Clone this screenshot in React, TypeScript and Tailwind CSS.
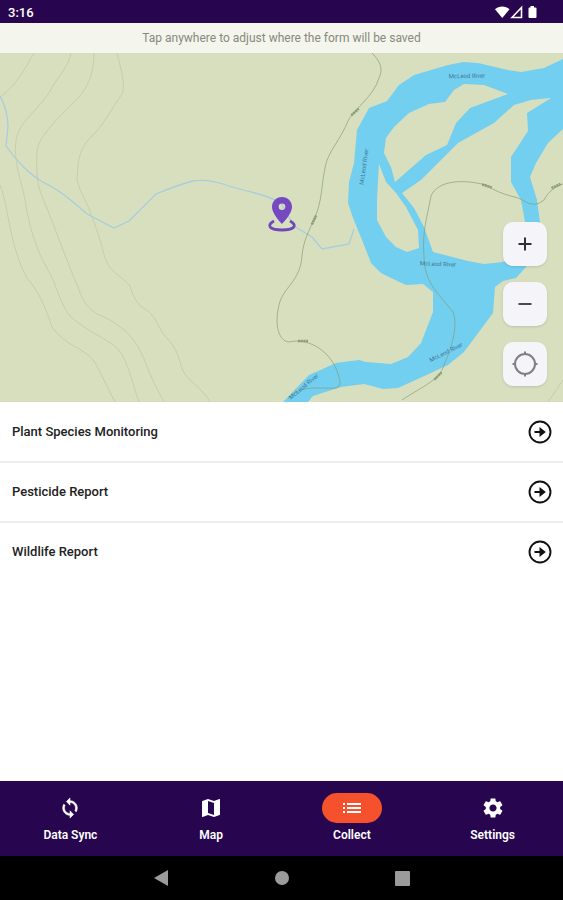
import { MdList, MdMap, MdSettings } from "react-icons/md";

const forms = ["Plant Species Monitoring", "Pesticide Report", "Wildlife Report"];

function SyncIcon({ className }: { className?: string }) {
  return (
    <svg className={className} viewBox="0 0 24 24" fill="currentColor" stroke="currentColor" strokeWidth="0.6" aria-hidden="true">
      <path d="M12 4V1L8 5l4 4V6c3.310 0 6 2.690 6 6 0 1.010-.25 1.970-.7 2.800l1.460 1.460C19.540 15.030 20 13.570 20 12c0-4.420-3.580-8-8-8zm0 14c-3.310 0-6-2.690-6-6 0-1.010.25-1.970.7-2.800L5.240 7.740C4.460 8.970 4 10.430 4 12c0 4.420 3.580 8 8 8v3l4-4-4-4v3z" />
    </svg>
  );
}

const tabs = [
  { label: "Data Sync", Icon: SyncIcon, active: false },
  { label: "Map", Icon: MdMap, active: false },
  { label: "Collect", Icon: MdList, active: true },
  { label: "Settings", Icon: MdSettings, active: false },
];

const riverNames = [
  { x: 467, y: 78, angle: -1 },
  { x: 366, y: 167, angle: -82 },
  { x: 438, y: 266, angle: 2 },
  { x: 447, y: 354, angle: -27 },
  { x: 305, y: 388, angle: -40 },
];

const elevations = [
  { x: 355, y: 112, angle: -42 },
  { x: 314, y: 220, angle: -65 },
  { x: 487, y: 186, angle: 18 },
  { x: 556, y: 186, angle: -25 },
  { x: 303, y: 341, angle: 0 },
  { x: 438, y: 376, angle: -45 },
];

function StatusBar() {
  return (
    <header className="flex h-[23px] items-center justify-between bg-[#27064f] pr-[26px] pl-2 text-white">
      <span className="pt-0.5 text-[13px] leading-4 font-medium">3:16</span>
      <svg className="h-4 w-[42px]" viewBox="0 0 42 16" aria-hidden="true">
        <path d="M0 5.200C4 1.500 10.500 1.500 14.500 5.200L7.250 14Z" fill="#fff" />
        <path d="M17 13.500 26.500 3.500V13.500Z" fill="none" stroke="#fff" strokeWidth="1.600" />
        <path d="M34 3.500H35.500V2H39V3.500H40.500Q41.500 3.500 41.500 4.500V13Q41.500 14 40.500 14H34.500Q33.500 14 33.500 13V4.500Z" fill="#fff" />
      </svg>
    </header>
  );
}

function Terrain() {
  return (
    <svg
      className="absolute inset-0 h-full w-full"
      viewBox="0 53 563 349"
      preserveAspectRatio="xMidYMid slice"
      role="img"
      aria-label="McLeod River"
    >
      <rect x="0" y="53" width="563" height="349" fill="#d8dfbf" />
      <g fill="none" stroke="#c5cfab" strokeWidth="1">
        <path d="M34 53C24 70 16 86 0 97" />
        <path d="M71 53C68 68 58 76 50 91C39 110 19 121 16 140C13 163 22 182 25 200C29 225 35 248 48 270C56 283 60 304 70 316C90 334 104 336 119 350C128 362 132 382 139 402" />
        <path d="M94 53C94 70 90 85 78 98C61 115 38 137 37 151C36 174 37 186 44 201C54 225 65 257 78 287C84 305 91 312 102 316C123 326 135 337 144 359C151 378 158 391 164 402" />
        <path d="M117 53C121 69 126 86 122 94C110 111 103 126 92 136C80 148 78 157 77 180C81 195 88 204 90 212C97 229 102 246 105 258C110 273 122 276 130 286C133 295 136 305 147 310C158 319 159 332 169 340C183 357 178 369 189 379C199 388 206 394 210 402" />
        <path d="M0 185C9 207 9 245 27 278C41 294 46 310 52 327C65 346 83 347 94 361C102 375 108 389 115 402" />
        <path d="M563 380 548 402" />
      </g>
      <path
        fill="none"
        stroke="#a9cddc"
        strokeWidth="1.300"
        d="M0 96C5 104 8 117 8 126L6 146C17 162 31 175 41 181C55 188 65 195 72 201L87 214L114 228L129 221L156 194C168 189 181 184 193 181C207 179 218 182 229 186C251 193 263 193 281 203L294 226L312 237L322 249L349 244L354 229"
      />
      <path
        fill="#73cff0"
        fillRule="evenodd"
        d="M563 59 544 68 521 72 508 70 478 63 463 62 448 65 414 75 399 85 387 101 369 108 357 130 354 163 349 182 348 203 353 218 364 245 371 263 381 273 391 278 406 285 423 284 433 292 433 312 421 343 408 357 391 364 366 362 359 360 336 363 309 375 283 402 308 402 313 396 341 387 364 384 383 389 398 388 431 373 448 365 464 352 493 313 495 287 503 281 516 278 526 267 536 250 540 222 537 200 530 177 536 163 548 143 563 129ZM551 98 527 113 528 131 511 157 511 182 521 200 525 222 525 255 503 262 484 264 468 261 433 252 424 227 414 208 402 193 421 180 458 143 494 123 514 105 531 100ZM508 94 484 85 464 84 454 90 445 102 429 104 409 113 394 127 386 138 384 153 391 167 395 182 426 155 447 145 456 123 470 108ZM379 164 377 200 377 220 386 237 396 247 407 252 419 248 418 230 406 207 396 193 386 182Z"
      />
      <g fill="none" stroke="#7f9b70" strokeOpacity=".65" strokeWidth="1">
        <path d="M372 53C379 60 384 68 379 78C374 96 354 109 348 121C341 139 327 153 325 168C322 182 322 196 318 209C313 225 304 236 302 255C301 281 283 287 279 305C274 326 279 341 289 342C310 337 332 353 338 374Q343 387 336 388C316 389 301 384 288 399" />
        <path d="M402 400C423 386 440 380 444 365C453 345 458 324 453 312C441 296 424 284 424 256C422 231 427 218 431 196C438 180 463 179 486 185C504 197 518 196 524 201Q535 208 544 200C549 190 556 187 563 184" />
      </g>
      <g fill="#3f7895" fontFamily="Roboto, sans-serif" fontSize="6" textAnchor="middle">
        {riverNames.map((name) => (
          <text key={name.x} x={name.x} y={name.y} transform={`rotate(${name.angle} ${name.x} ${name.y})`}>
            McLeod River
          </text>
        ))}
      </g>
      <g fill="none" stroke="#7f9472" strokeWidth="2.500" strokeDasharray="2.200 .5" strokeOpacity=".85">
        {elevations.map((mark) => (
          <path key={mark.x} d={`M${mark.x - 5} ${mark.y}h10`} transform={`rotate(${mark.angle} ${mark.x} ${mark.y})`} />
        ))}
      </g>
      <path d="M274 221C265 226 271 230 282 230C293 230 299 226 290 221" fill="none" stroke="#7048b8" strokeWidth="2.800" />
      <path
        d="M282 197C276 197 272 201.500 272 207C272 214 282 224 282 224S292 214 292 207C292 201.500 288 197 282 197ZM282 203.500A3.300 3.300 0 1 1 282 210.100A3.300 3.300 0 0 1 282 203.500Z"
        fill="#7549c0"
        fillRule="evenodd"
      />
    </svg>
  );
}

const controls = [
  {
    label: "Zoom in",
    art: <path d="M14 7.500V20.500M7.500 14H20.500" stroke="#303034" strokeWidth="2" />,
  },
  {
    label: "Zoom out",
    art: <path d="M7.500 14H20.500" stroke="#4a4a4e" strokeWidth="2" />,
  },
  {
    label: "My location",
    art: (
      <g stroke="#808084" strokeWidth="2">
        <circle cx="14" cy="14" r="10" />
        <path d="M14 1.500V4M14 24V26.500M1.500 14H4M24 14H26.500" />
      </g>
    ),
  },
];

export default function App() {
  return (
    <div className="flex min-h-screen flex-col bg-white font-[Roboto,sans-serif] text-[#222]">
      <StatusBar />
      <main className="flex flex-1 flex-col">
        <p className="bg-[#f4f5ec] py-[7px] text-center text-[12px] leading-4 text-[#88887f]">
          Tap anywhere to adjust where the form will be saved
        </p>
        <section className="relative flex min-h-[349px] items-end justify-end overflow-hidden bg-[#d8dfbf]">
          <Terrain />
          <div className="relative flex flex-col gap-4 pr-4 pb-4">
            {controls.map((control) => (
              <button
                key={control.label}
                type="button"
                aria-label={control.label}
                className="flex size-11 items-center justify-center rounded-[10px] bg-[#f5f4f8] shadow-sm"
              >
                <svg className="size-7" viewBox="0 0 28 28" fill="none" aria-hidden="true">
                  {control.art}
                </svg>
              </button>
            ))}
          </div>
        </section>
        <ul className="divide-y-2 divide-[#eeeeee] pt-px">
          {forms.map((form) => (
            <li key={form}>
              <button type="button" className="flex h-[58px] w-full items-center justify-between pr-[11px] pl-3 text-left">
                <span className="text-[13px] leading-4 font-medium">{form}</span>
                <svg className="size-6" viewBox="0 0 24 24" fill="none" aria-hidden="true">
                  <circle cx="12" cy="12" r="10.500" stroke="#111" strokeWidth="1.900" />
                  <path d="M6.500 10.900H11.500V7L17.800 12 11.500 17V13.100H6.500Z" fill="#111" />
                </svg>
              </button>
            </li>
          ))}
        </ul>
      </main>
      <nav className="grid h-[75px] grid-cols-4 bg-[#27064f] text-white">
        {tabs.map(({ label, Icon, active }) => (
          <button key={label} type="button" className="flex flex-col items-center gap-1 pt-3">
            <span className={active ? "flex h-[30px] w-[60px] items-center justify-center rounded-full bg-[#f4512c]" : "flex h-[30px] w-[60px] items-center justify-center"}>
              <Icon className={label === "Data Sync" ? "size-[22px]" : "size-6"} />
            </span>
            <span className="text-[12px] leading-4 font-semibold">{label}</span>
          </button>
        ))}
      </nav>
      <footer className="flex h-11 items-center justify-center gap-[106px] bg-black">
        <button type="button" aria-label="Back">
          <svg className="size-4" viewBox="0 0 16 16" aria-hidden="true"><path d="M1 8 15 0V16Z" fill="#9b9b9b" /></svg>
        </button>
        <button type="button" aria-label="Home" className="size-[14px] rounded-full bg-[#9b9b9b]" />
        <button type="button" aria-label="Recent apps" className="size-[15px] rounded-[1px] bg-[#9b9b9b]" />
      </footer>
    </div>
  );
}
